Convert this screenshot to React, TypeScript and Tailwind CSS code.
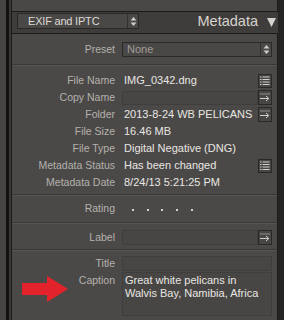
import React from 'react';

const font = { fontFamily: '"Liberation Sans", Arial, sans-serif' };

function UpDown() {
  return (
    <svg width="7" height="11" viewBox="0 0 7 11" className="block">
      <path d="M0.5 4.5 L3.5 1 L6.5 4.5 Z" fill="#cfccc8" />
      <path d="M0.5 6.5 L3.5 10 L6.5 6.5 Z" fill="#cfccc8" />
    </svg>
  );
}

function ListButton() {
  return (
    <div className="w-[14px] h-[14px] border border-[#2a2826] bg-[#484644] flex items-center justify-center shrink-0">
      <svg width="10" height="9" viewBox="0 0 10 9" className="block">
        <g fill="#d2cfcb">
          <rect x="0" y="0.5" width="1.5" height="1" />
          <rect x="2.5" y="0.5" width="7" height="1" />
          <rect x="0" y="3" width="1.5" height="1" />
          <rect x="2.5" y="3" width="7" height="1" />
          <rect x="0" y="5.5" width="1.5" height="1" />
          <rect x="2.5" y="5.5" width="7" height="1" />
          <rect x="0" y="8" width="1.5" height="1" />
          <rect x="2.5" y="8" width="7" height="1" />
        </g>
      </svg>
    </div>
  );
}

function ArrowButton() {
  return (
    <div className="w-[14px] h-[15px] border border-[#2a2826] bg-[#484644] flex items-center justify-center shrink-0">
      <svg width="10" height="9" viewBox="0 0 10 9" className="block">
        <rect x="0" y="0.5" width="10" height="1" fill="#8f8c88" />
        <path d="M0 5.5 H8.5 M6 3 L8.8 5.5 L6 8" stroke="#d2cfcb" strokeWidth="1" fill="none" />
      </svg>
    </div>
  );
}

function Separator() {
  return (
    <div>
      <div className="h-px bg-[#3a3836]" />
      <div className="h-px bg-[#575452]" />
    </div>
  );
}

function Row({ label, children }: { label: string; children?: React.ReactNode }) {
  return (
    <div className="flex h-[17px] items-center leading-[17px]">
      <div className="w-[103px] text-right text-[10.5px] text-[#b4b1ad] shrink-0">{label}</div>
      <div className="flex-1 ml-[7px] flex items-center min-w-0">{children}</div>
    </div>
  );
}

function Value({ text }: { text: string }) {
  return <span className="pl-[2px] text-[11px] text-[#e8e6e3] whitespace-nowrap flex-1">{text}</span>;
}

export default function App() {
  const data = [
    { label: 'File Name', value: 'IMG_0342.dng', btn: 'list' },
    { label: 'Copy Name', value: '', btn: 'arrow', field: true },
    { label: 'Folder', value: '2013-8-24 WB PELICANS', btn: 'arrow' },
    { label: 'File Size', value: '16.46 MB' },
    { label: 'File Type', value: 'Digital Negative (DNG)' },
    { label: 'Metadata Status', value: 'Has been changed', btn: 'list' },
    { label: 'Metadata Date', value: '8/24/13 5:21:25 PM' },
  ];

  return (
    <div className="w-[284px] h-[320px] overflow-hidden flex bg-[#3f3d3b] relative" style={font}>
      {/* left frame strip */}
      <div className="w-[6px] bg-[#474543]" />
      <div className="w-[3px] bg-[#121212]" />
      <div className="w-[2px] bg-[#3b3937]" />

      <div className="flex-1 flex flex-col">
        {/* previous panel remnant */}
        <div className="h-[12px] bg-[#4a4846] border-l border-b border-r border-[#1c1b1a]" />

        {/* header */}
        <div className="h-[21px] flex items-start pt-[1px] pl-[5px] pr-[2px] border-l border-[#1c1b1a]">
          <div className="w-[122px] h-[16px] border border-[#2a2826] bg-[#4a4846] flex items-center">
            <span className="flex-1 pl-[10px] text-[11px] tracking-[-0.2px] text-[#dcd9d5]">EXIF and IPTC</span>
            <div className="w-[11px] h-full border-l border-[#33312f] flex items-center justify-center">
              <UpDown />
            </div>
          </div>
          <span className="ml-auto mt-[1px] text-[14.5px] text-[#d6d3cf] leading-none">Metadata</span>
          <svg width="9" height="9" viewBox="0 0 9 9" className="ml-[9px] mt-[5px]">
            <path d="M0 0 H9 L4.5 9 Z" fill="#d6d3cf" />
          </svg>
        </div>

        {/* metadata panel */}
        <div className="flex-1 bg-[#4b4947] border-t border-l border-r border-[#1c1b1a] pt-[8px] pr-[5px]">
          <div className="flex h-[15px] items-center">
            <div className="w-[103px] text-right text-[10.5px] text-[#b4b1ad] shrink-0">Preset</div>
            <div className="flex-1 ml-[7px] h-[15px] border border-[#2c2a28] bg-[#4a4846] flex items-center">
              <span className="flex-1 pl-[4px] text-[11px] text-[#a09d99]">None</span>
              <div className="w-[11px] h-full border-l border-[#33312f] flex items-center justify-center">
                <UpDown />
              </div>
            </div>
          </div>

          <div className="mt-[7px] -mr-[5px]">
            <Separator />
          </div>

          <div className="mt-[6px]">
            {data.map((d) => (
              <Row key={d.label} label={d.label}>
                {d.field ? (
                  <div className="flex-1 h-[14px] border border-[#403e3c] bg-[#484644]" />
                ) : (
                  <Value text={d.value} />
                )}
                {d.btn === 'list' && <ListButton />}
                {d.btn === 'arrow' && <ArrowButton />}
              </Row>
            ))}
          </div>

          <div className="mt-[3px] -mr-[5px]">
            <Separator />
          </div>

          <div className="mt-[4px]">
            <Row label="Rating">
              <div className="flex gap-[12.7px] pl-[10px] pt-[2px]">
                {[0, 1, 2, 3, 4].map((i) => (
                  <div key={i} className="w-[2px] h-[2px] bg-[#d4d1cd]" />
                ))}
              </div>
            </Row>
          </div>

          <div className="mt-[5px] -mr-[5px]">
            <Separator />
          </div>

          <div className="mt-[5px]">
            <Row label="Label">
              <div className="flex-1 h-[15px] border border-[#403e3c] bg-[#484644]" />
              <ArrowButton />
            </Row>
          </div>

          <div className="mt-[3px] -mr-[5px]">
            <Separator />
          </div>

          <div className="mt-[4px]">
            <Row label="Title">
              <div className="flex-1 h-[15px] border border-[#403e3c] bg-[#484644]" />
            </Row>
          </div>

          <div className="flex">
            <div className="w-[103px] text-right text-[10.5px] text-[#b4b1ad] shrink-0 leading-[13px] pt-[2px]">Caption</div>
            <div className="flex-1 ml-[7px] h-[44px] border border-[#403e3c] bg-[#484644] pl-[2px] pt-[1px] text-[11px] leading-[13px] text-[#e8e6e3]">
              Great white pelicans in
              <br />
              Walvis Bay, Namibia, Africa
            </div>
          </div>
        </div>
      </div>

      {/* right frame strip */}
      <div className="w-[6px] bg-[#262423]" />

      {/* red annotation arrow */}
      <svg width="48" height="27" viewBox="0 0 48 27" className="absolute left-[22px] top-[276px]">
        <path d="M0 7 H25 V0 L46 13 L25 26 V19 H0 Z" fill="#e3232b" />
      </svg>
    </div>
  );
}
